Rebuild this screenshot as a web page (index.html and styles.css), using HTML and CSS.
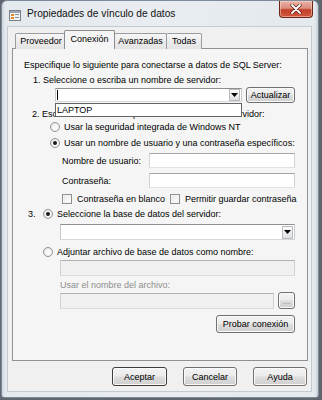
FILE: index.html
```html
<!DOCTYPE html>
<html lang="es">
<head>
<meta charset="utf-8">
<title>Propiedades de vínculo de datos</title>
<link rel="stylesheet" href="styles.css">
</head>
<body>
<div class="window">
  <div class="titlebar">
    <svg class="appicon" width="12" height="12" viewBox="0 0 12 12">
      <rect x="0.5" y="1.5" width="11" height="10" fill="#f4f4f4" stroke="#7a7f88"/>
      <rect x="1" y="2" width="10" height="2" fill="#9aa6b6"/>
      <rect x="2" y="5" width="3" height="2" fill="#e08a2a"/>
      <rect x="2" y="8" width="3" height="2" fill="#e08a2a"/>
      <rect x="6" y="5" width="4" height="1" fill="#8a8f96"/>
      <rect x="6" y="8" width="4" height="1" fill="#8a8f96"/>
    </svg>
    <span class="title">Propiedades de vínculo de datos</span>
    <div class="close">
      <svg width="12" height="10" viewBox="0 0 12 10">
        <path d="M2 1 L10 9 M10 1 L2 9" stroke="#5a1a10" stroke-width="3.2" stroke-linecap="round"/>
        <path d="M2 1 L10 9 M10 1 L2 9" stroke="#ffffff" stroke-width="1.8" stroke-linecap="round"/>
      </svg>
    </div>
  </div>
  <div class="client">
    <div class="tabs">
      <div class="tab tab-prov">Proveedor</div>
      <div class="tab tab-active">Conexión</div>
      <div class="tab tab-avz">Avanzadas</div>
      <div class="tab tab-todas">Todas</div>
    </div>
    <div class="panel">
      <div class="row r1">Especifique lo siguiente para conectarse a datos de SQL Server:</div>
      <div class="row r2 ind-step1">1. Seleccione o escriba un nombre de servidor:</div>
      <div class="row r3 server-row">
        <div class="combo-wrap">
          <div class="combo combo-server">
            <span class="caret"></span>
            <span class="arrow"><svg width="7" height="4" viewBox="0 0 7 4"><path d="M0 0 H7 L3.5 4 Z" fill="#000"/></svg></span>
          </div>
          <div class="droplist">LAPTOP</div>
        </div>
        <button class="btn btn-refresh">Actualizar</button>
      </div>
      <div class="row r4 ind-step2">2. Escriba la información para iniciar sesión en el servidor:</div>
      <div class="row r5 ind-radio2"><span class="radio"></span><span>Usar la seguridad integrada de Windows NT</span></div>
      <div class="row r6 ind-radio2"><span class="radio checked"></span><span>Usar un nombre de usuario y una contraseña específicos:</span></div>
      <div class="row r7 ind-field"><span class="flabel">Nombre de usuario:</span><span class="textbox grow"></span></div>
      <div class="row r8 ind-field"><span class="flabel">Contraseña:</span><span class="textbox grow"></span></div>
      <div class="row r9 ind-field">
        <span class="check"></span><span class="cb1-text">Contraseña en blanco</span>
        <span class="check"></span><span>Permitir guardar contraseña</span>
      </div>
      <div class="row r10 ind-step3"><span class="num3">3.</span><span class="radio checked"></span><span>Seleccione la base de datos del servidor:</span></div>
      <div class="row r11 ind-db">
        <div class="combo grow">
          <span class="arrow"><svg width="7" height="4" viewBox="0 0 7 4"><path d="M0 0 H7 L3.5 4 Z" fill="#000"/></svg></span>
        </div>
      </div>
      <div class="row r12 ind-radio3"><span class="radio"></span><span>Adjuntar archivo de base de datos como nombre:</span></div>
      <div class="row r13 ind-db"><span class="textbox disabled grow"></span></div>
      <div class="row r14 ind-db disabled-text">Usar el nombre del archivo:</div>
      <div class="row r15 ind-db"><span class="textbox disabled grow"></span><button class="btn btn-dots">...</button></div>
      <div class="row r16"><button class="btn btn-test">Probar conexión</button></div>
    </div>
    <div class="buttons">
      <button class="btn btn-dlg btn-ok">Aceptar</button>
      <button class="btn btn-dlg">Cancelar</button>
      <button class="btn btn-dlg">Ayuda</button>
    </div>
  </div>
</div>
</body>
</html>
```

FILE: styles.css
```css
* { box-sizing: border-box; }

html, body {
  margin: 0;
  padding: 0;
}

body {
  width: 322px;
  height: 400px;
  background: #5f666e;
  font-family: "Liberation Sans", Arial, sans-serif;
  font-size: 9px;
  color: #000;
  overflow: hidden;
}

.window {
  margin-left: 1px;
  width: 318px;
  height: 398px;
  border-radius: 6px 6px 3px 3px;
  background: linear-gradient(90deg, #c9d3dc 0px, #e4e9ee 3px, #e9edf1 50%, #e4e9ee calc(100% - 3px), #c3ccd6 100%);
  border: 1px solid #7d8a97;
  display: flex;
  flex-direction: column;
}

.titlebar {
  height: 25px;
  display: flex;
  align-items: flex-start;
  position: relative;
}

.appicon {
  margin: 8px 0 0 7px;
  flex: none;
}

.title {
  margin: 7px 0 0 6px;
  font-size: 10.2px;
  line-height: 12px;
  color: #111;
}

.close {
  margin-left: auto;
  margin-right: 5px;
  margin-top: 0;
  width: 34px;
  height: 17px;
  border: 1px solid #6e2418;
  border-top: none;
  border-radius: 0 0 4px 4px;
  background: linear-gradient(180deg, #e9b2a6 0%, #dc8c7c 45%, #c2402a 55%, #d2583c 100%);
  box-shadow: inset 0 0 0 1px rgba(255, 220, 210, 0.5);
  display: flex;
  align-items: center;
  justify-content: center;
}

.client {
  margin: 0 6px 0 5px;
  height: 366px;
  background: #f0f0f0;
  border: 1px solid #c2cad2;
  display: flex;
  flex-direction: column;
  padding: 3px 3px 0 4px;
}

.tabs {
  display: flex;
  align-items: flex-end;
  height: 19px;
  padding-left: 3px;
  position: relative;
  z-index: 1;
  margin-bottom: -1px;
}

.tab {
  height: 16px;
  border: 1px solid #9a9ca2;
  border-bottom: none;
  border-radius: 2px 2px 0 0;
  background: linear-gradient(180deg, #f6f6f6 0%, #ececec 50%, #e3e3e3 100%);
  line-height: 15px;
  text-align: center;
  margin-right: -1px;
}

.tab-prov { width: 52px; }
.tab-avz { width: 53px; }
.tab-todas { width: 36px; }

.tab-active {
  width: 51px;
  height: 19px;
  background: #f5f5f5;
  border-color: #8a8d94;
  position: relative;
  z-index: 2;
  line-height: 16px;
  margin: 0 -1px 0 -2px;
}

.panel {
  height: 313px;
  border: 1px solid #8e9196;
  background: #f5f5f5;
  padding: 10px 12px 0 11px;
  display: flex;
  flex-direction: column;
}

.row {
  display: flex;
  align-items: center;
  line-height: 12px;
  height: 12px;
  flex: none;
  white-space: nowrap;
}

.r2 { margin-top: 3px; }
.r3 { margin-top: 1px; height: 16px; }
.r4 { margin-top: 5px; }
.r5 { margin-top: 1px; }
.r6 { margin-top: 4px; }
.r7 { margin-top: 4px; height: 15px; }
.r8 { margin-top: 5px; height: 15px; }
.r9 { margin-top: 5px; }
.r10 { margin-top: 3px; }
.r11 { margin-top: 4px; height: 16px; }
.r12 { margin-top: 6px; }
.r13 { margin-top: 2px; height: 16px; }
.r14 { margin-top: 3px; }
.r15 { margin-top: 1px; height: 17px; }
.r16 { margin-top: 6px; height: 18px; justify-content: flex-end; }

.ind-step1 { padding-left: 9px; }
.ind-step2 { padding-left: 8px; }
.ind-radio2 { padding-left: 26px; }
.ind-field { padding-left: 38px; }
.ind-step3 { padding-left: 4px; }
.ind-radio3 { padding-left: 19px; }
.ind-db { padding-left: 36px; }

.server-row {
  padding-left: 31px;
  align-items: center;
}

.combo-wrap {
  position: relative;
  width: 187px;
  height: 14px;
}

.combo {
  position: relative;
  height: 14px;
  background: #fff;
  border: 1px solid;
  border-color: #8e8f8f #c6c9ce #d5d8dc #c6c9ce;
  display: flex;
  align-items: center;
  justify-content: flex-end;
}

.combo-server { width: 187px; height: 14px; }

.r11 .combo { height: 16px; }

.caret {
  position: absolute;
  left: 1px;
  top: 1px;
  width: 1px;
  height: 10px;
  background: #000;
}

.arrow {
  width: 11px;
  margin-right: 1px;
  border: 1px solid #b9bcc0;
  background: linear-gradient(180deg, #fbfbfb 0%, #eeeeee 50%, #dedede 100%);
  display: flex;
  align-items: center;
  justify-content: center;
  height: 12px;
}

.r11 .arrow { height: 13px; }

.droplist {
  position: absolute;
  left: 0;
  top: 15px;
  width: 187px;
  height: 14px;
  background: #fff;
  border: 1px solid #646464;
  padding-left: 1px;
  line-height: 12px;
  z-index: 5;
}

.grow { flex: 1; }

.btn {
  font-family: "Liberation Sans", Arial, sans-serif;
  font-size: 9px;
  color: #000;
  padding: 0;
  border: 1px solid #707070;
  border-radius: 3px;
  background: linear-gradient(180deg, #f3f3f3 0%, #ebebeb 48%, #dddddd 52%, #cfcfcf 100%);
  box-shadow: inset 0 0 0 1px #fafafa;
  line-height: 12px;
}

.btn-refresh {
  margin-left: 4px;
  width: 50px;
  height: 16px;
}

.flabel {
  width: 87px;
}

.textbox {
  display: block;
  height: 15px;
  background: #fff;
  border: 1px solid;
  border-color: #a3a5a9 #cfd2d6 #dfe2e6 #cfd2d6;
}

.textbox.disabled {
  height: 16px;
  background: #f0f0f0;
  border-color: #aeb0b3 #cfd1d4 #dadcdf #cfd1d4;
}

.check {
  width: 10px;
  height: 10px;
  border: 1px solid #8f8f8f;
  background: linear-gradient(135deg, #e6e6e6 0%, #ffffff 100%);
  box-shadow: inset 0 0 0 1px #f4f4f4;
  margin-right: 5px;
  flex: none;
}

.cb1-text { margin-right: 5px; }

.radio {
  width: 10px;
  height: 10px;
  border-radius: 50%;
  border: 1px solid #929292;
  background: radial-gradient(circle at 60% 60%, #ffffff 0%, #f1f1f1 50%, #dcdcdc 100%);
  margin-right: 4px;
  flex: none;
  position: relative;
}

.radio.checked::after {
  content: "";
  position: absolute;
  left: 2px;
  top: 2px;
  width: 4px;
  height: 4px;
  border-radius: 50%;
  background: #1b1b1b;
}

.num3 { width: 15px; }

.disabled-text { color: #8d8d8d; }

.btn-dots {
  margin-left: 4px;
  width: 17px;
  height: 17px;
  line-height: 10px;
  color: #8d8d8d;
}

.btn-test {
  width: 79px;
  height: 18px;
}

.buttons {
  display: flex;
  justify-content: flex-end;
  gap: 16px;
  margin-top: 6px;
  padding-right: 1px;
}

.btn-dlg {
  width: 54px;
  height: 19px;
}

.btn-ok {
  width: 55px;
  border-color: #3c3c3c;
}
```
